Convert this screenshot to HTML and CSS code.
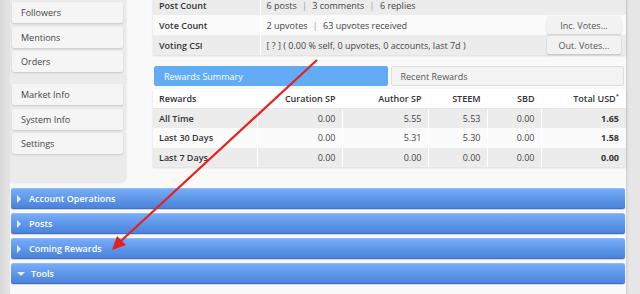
FILE: index.html
```html
<!DOCTYPE html>
<html lang="en">
  <head>
    <meta charset="UTF-8" />
    <title>Account Info</title>
    <link rel="stylesheet" href="styles.css">
  </head>
  <body>
    <div class="page">
      <div class="top-section">
        <div class="sidebar">
          <div class="side-item">Followers</div>
          <div class="side-item">Mentions</div>
          <div class="side-item">Orders</div>
          <div class="side-item side-gap">Market Info</div>
          <div class="side-item">System Info</div>
          <div class="side-item">Settings</div>
        </div>
        <div class="main">
          <table class="info-table">
            <tr class="alt">
              <td class="label">Post Count</td>
              <td colspan="2">6 posts <span class="sep">|</span> 3 comments <span class="sep">|</span> 6 replies</td>
            </tr>
            <tr>
              <td class="label">Vote Count</td>
              <td>2 upvotes <span class="sep">|</span> 63 upvotes received</td>
              <td class="btn-cell"><button class="small-btn">Inc. Votes...</button></td>
            </tr>
            <tr class="alt">
              <td class="label">Voting CSI</td>
              <td>[ ? ] ( 0.00 % self, 0 upvotes, 0 accounts, last 7d )</td>
              <td class="btn-cell"><button class="small-btn">Out. Votes...</button></td>
            </tr>
          </table>

          <div class="tabs">
            <div class="tab active">Rewards Summary</div>
            <div class="tab">Recent Rewards</div>
          </div>

          <table class="rewards-table">
            <tr class="head">
              <td class="name">Rewards</td>
              <td class="c1">Curation SP</td>
              <td class="c2">Author SP</td>
              <td class="c3">STEEM</td>
              <td class="c4">SBD</td>
              <td class="c5">Total USD<sup>*</sup></td>
            </tr>
            <tr class="alt">
              <td class="name">All Time</td>
              <td>0.00</td><td>5.55</td><td>5.53</td><td>0.00</td><td class="total">1.65</td>
            </tr>
            <tr>
              <td class="name">Last 30 Days</td>
              <td>0.00</td><td>5.31</td><td>5.30</td><td>0.00</td><td class="total">1.58</td>
            </tr>
            <tr class="alt">
              <td class="name">Last 7 Days</td>
              <td>0.00</td><td>0.00</td><td>0.00</td><td>0.00</td><td class="total">0.00</td>
            </tr>
          </table>
        </div>
      </div>

      <div class="accordion">
        <div class="acc-bar"><span class="tri right"></span>Account Operations</div>
        <div class="acc-bar"><span class="tri right"></span>Posts</div>
        <div class="acc-bar"><span class="tri right"></span>Coming Rewards</div>
        <div class="acc-bar"><span class="tri down"></span>Tools</div>
      </div>
    </div>

    <svg class="arrow" width="640" height="294" viewBox="0 0 640 294" xmlns="http://www.w3.org/2000/svg">
      <line x1="317" y1="60" x2="121" y2="241" stroke="#e5201d" stroke-width="2.2" />
      <polygon points="112,250 117,236 126,245" fill="#e5201d" />
    </svg>
  </body>
</html>
```

FILE: styles.css
```css
* {
  box-sizing: border-box;
}
body {
  margin: 0;
  font-family: "Open Sans", "Liberation Sans", sans-serif;
  font-size: 9px;
  color: #333;
  background: linear-gradient(to right, #d9d9d9 0, #e6e6e6 10px, #e6e6e6 100%);
  height: 294px;
  overflow: hidden;
  position: relative;
}
.page {
  margin-left: 10px;
  width: 616px;
  height: 300px;
  margin-top: -5px;
  background: #f9f9f9;
  box-shadow: 1px 0 2px rgba(0, 0, 0, 0.12);
}
.top-section {
  display: flex;
  align-items: flex-start;
}
.sidebar {
  width: 115px;
  height: 187px;
  background: #ebebeb;
  padding: 7px 2px 0 2px;
  border-radius: 0 0 6px 0;
  box-shadow: 1px 1px 3px rgba(0, 0, 0, 0.1);
}
.side-item {
  height: 21px;
  line-height: 21px;
  margin-bottom: 3.5px;
  padding-left: 9px;
  background: #f5f5f5;
  color: #444;
  border-radius: 2px;
  box-shadow: 0 1px 2px rgba(0, 0, 0, 0.15);
}
.side-gap {
  margin-top: 12px;
}
.main {
  margin-left: 28px;
  width: 473px;
}
.info-table {
  width: 473px;
  table-layout: fixed;
  border-collapse: collapse;
  background: #fafafa;
  box-shadow: 0 1px 2px rgba(0, 0, 0, 0.12);
}
.info-table td {
  height: 20px;
  padding: 0 6px;
  color: #444;
  white-space: nowrap;
}
.info-table .label {
  width: 107px;
  font-weight: 600;
  color: #333;
  border-right: 1px solid #fff;
}
.info-table tr.alt td {
  background: #ececec;
}
.sep {
  color: #999;
  margin: 0 3px;
}
.btn-cell {
  text-align: right;
  width: 84px;
  padding: 0 5px 0 0 !important;
}
.small-btn {
  font-family: "Open Sans", "Liberation Sans", sans-serif;
  font-size: 9px;
  color: #555;
  width: 74px;
  height: 18px;
  border: none;
  border-radius: 2px;
  background: #f2f2f2;
  box-shadow: 0 1px 2px rgba(0, 0, 0, 0.2);
  padding: 0;
}
.tabs {
  display: flex;
  gap: 3px;
  margin-top: 11px;
  padding-left: 1px;
  padding-right: 2px;
}
.tab {
  flex: 1;
  height: 20px;
  line-height: 19px;
  padding-left: 9px;
  border-radius: 2px;
  background: #f3f3f3;
  border: 1px solid #dedede;
  color: #555;
}
.tab.active {
  background: #62acf6;
  border-color: #62acf6;
  color: #fff;
}
.rewards-table {
  width: 473px;
  table-layout: fixed;
  margin-top: 3px;
  border-collapse: collapse;
  background: #fbfbfb;
  box-shadow: 0 1px 2px rgba(0, 0, 0, 0.12);
}
.rewards-table td {
  height: 19.5px;
  padding: 0 6px;
  text-align: right;
  color: #444;
  border-right: 1px solid #fff;
}
.rewards-table td:last-child {
  border-right: none;
  padding-right: 7px;
}
.rewards-table .name {
  text-align: left;
  width: 104px;
  color: #333;
}
.rewards-table tr.head td {
  font-weight: 600;
  color: #333;
  background: #fff;
  border-bottom: 1px solid #e4e4e4;
}
.rewards-table tr.alt td {
  background: #ececec;
}
.rewards-table tr:not(.head) .name {
  font-weight: 600;
}
.rewards-table .c1 {
  width: 85px;
}
.rewards-table .c2 {
  width: 86px;
}
.rewards-table .c3 {
  width: 59px;
}
.rewards-table .c4 {
  width: 54px;
}
.rewards-table .total {
  font-weight: 700;
  color: #333;
}
sup {
  font-size: 6px;
  line-height: 0;
}
.accordion {
  margin-top: 6px;
  padding: 0 1px;
}
.acc-bar {
  height: 21px;
  line-height: 20px;
  margin-bottom: 4px;
  padding-left: 6px;
  display: flex;
  align-items: center;
  font-weight: 600;
  color: #fff;
  background: linear-gradient(to bottom, #76acf8, #5b93e6 60%, #4b83dc);
  border-top: 1px solid #8dbcfa;
  border-bottom: 1px solid #3b72cf;
  border-radius: 2px;
  box-shadow: 0 1px 1px rgba(0, 0, 0, 0.15);
}
.tri {
  width: 0;
  height: 0;
  margin-right: 8px;
}
.tri.right {
  border-top: 4px solid transparent;
  border-bottom: 4px solid transparent;
  border-left: 4px solid #e6ecf5;
}
.tri.down {
  border-left: 4px solid transparent;
  border-right: 4px solid transparent;
  border-top: 4px solid #e6ecf5;
  margin-right: 6px;
}
.arrow {
  position: absolute;
  top: 0;
  left: 0;
  pointer-events: none;
}
```
